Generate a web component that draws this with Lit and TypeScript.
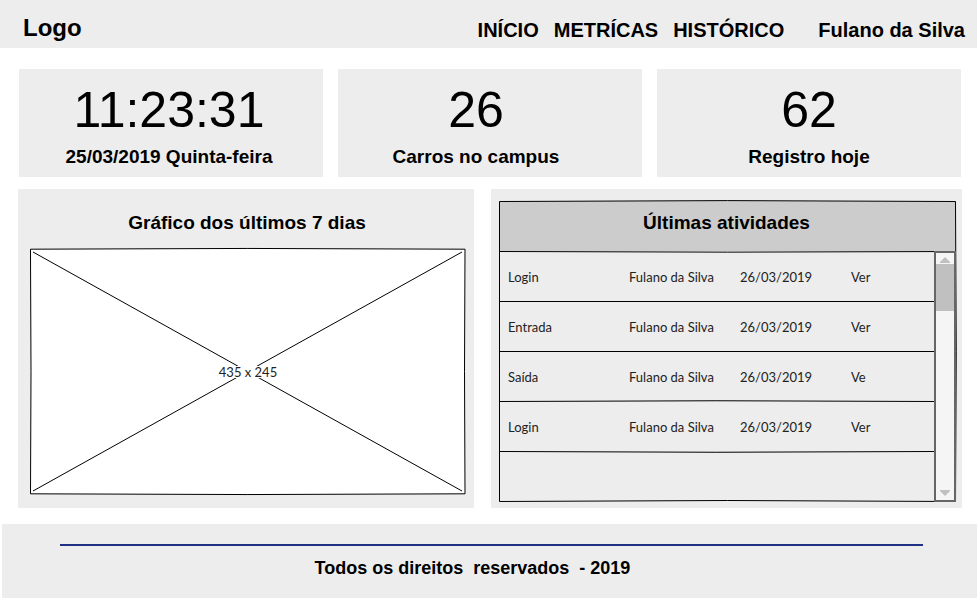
import { LitElement, html, css, svg } from "lit";
import { customElement, property } from "lit/decorators.js";

interface Stat {
  value: string;
  label: string;
  kind: string;
}

interface Activity {
  action: string;
  user: string;
  date: string;
  link: string;
}

const STATS: Stat[] = [
  { value: "11:23:31", label: "25/03/2019 Quinta-feira", kind: "clock" },
  { value: "26", label: "Carros no campus", kind: "cars" },
  { value: "62", label: "Registro hoje", kind: "records" },
];

const ACTIVITIES: Activity[] = [
  { action: "Login", user: "Fulano da Silva", date: "26/03/2019", link: "Ver" },
  { action: "Entrada", user: "Fulano da Silva", date: "26/03/2019", link: "Ver" },
  { action: "Saída", user: "Fulano da Silva", date: "26/03/2019", link: "Ve" },
  { action: "Login", user: "Fulano da Silva", date: "26/03/2019", link: "Ver" },
];

@customElement("chart-placeholder")
class ChartPlaceholder extends LitElement {
  @property() label = "";

  static styles = css`
    :host {
      position: relative;
      display: grid;
      place-items: center;
      height: 247px;
    }
    .sketch {
      position: absolute;
      inset: 0;
      width: 100%;
      height: 100%;
      overflow: visible;
    }
    .frame {
      fill: #fff;
      stroke: #000;
      vector-effect: non-scaling-stroke;
    }
    .cross {
      fill: none;
      stroke: #000;
      vector-effect: non-scaling-stroke;
    }
    .size {
      position: relative;
      background: #fff;
      font: 13px/12px Lato, "Open Sans", sans-serif;
      color: #222;
    }
  `;

  render() {
    return html`
      <svg class="sketch" viewBox="0 0 436 247" preserveAspectRatio="none" aria-hidden="true">
        <path
          class="frame"
          d="M0.5 1.2 Q218 -0.3 435 1.2 Q434 124 435 245.8 Q218 247.3 0.5 245.8 Q1.5 124 0.5 1.2Z"
        />
        <path class="cross" d="M3 4 L432 243 M432 4 L3 243" />
      </svg>
      <span class="size">${this.label}</span>
    `;
  }
}

@customElement("activity-list")
class ActivityList extends LitElement {
  @property({ attribute: false }) items: Activity[] = [];

  static styles = css`
    :host {
      position: relative;
      display: block;
    }
    .title {
      margin: 0;
      height: 50px;
      box-sizing: border-box;
      padding-right: 2px;
      background: #ccc;
      text-align: center;
      font-size: 19px;
      line-height: 44px;
      font-weight: bold;
    }
    .body {
      display: flex;
      height: 251px;
    }
    .rows {
      flex: 1;
    }
    .table {
      width: 100%;
      border-collapse: collapse;
      table-layout: fixed;
      font: 13px/20px Lato, "Open Sans", sans-serif;
      color: #222;
    }
    .wide {
      width: 121px;
    }
    .mid {
      width: 111px;
    }
    .cell {
      height: 50px;
      box-sizing: border-box;
      padding: 1px 0 0 9px;
      text-align: left;
    }
    .link {
      color: inherit;
      text-decoration: none;
    }
    .lines {
      position: absolute;
      inset: 0;
      width: 100%;
      height: 100%;
      overflow: visible;
      pointer-events: none;
    }
    .line {
      fill: none;
      stroke: #000;
      vector-effect: non-scaling-stroke;
    }
    .scroll {
      position: relative;
      z-index: 1;
      box-sizing: border-box;
      width: 22px;
      border: 2px solid #666;
      background: #f5f5f5;
      display: flex;
      flex-direction: column;
    }
    .arrow {
      display: grid;
      place-items: center;
      box-sizing: border-box;
      height: 11px;
      padding: 3px 0 1px;
      border: 0;
      background: none;
    }
    .down {
      margin-top: auto;
      height: 14px;
      padding: 0;
    }
    .glyph {
      display: block;
      width: 10px;
      height: 6px;
      fill: #c0c0c0;
    }
    .thumb {
      height: 47px;
      background: #c0c0c0;
    }
  `;

  render() {
    return html`
      <h2 class="title" id="title">Últimas atividades</h2>
      <div class="body">
        <div class="rows">
          <table class="table" aria-labelledby="title">
            <colgroup>
              <col class="wide" />
              <col class="mid" />
              <col class="mid" />
              <col />
            </colgroup>
            <tbody>
              ${this.items.map(
                (a) => html`<tr>
                  <td class="cell">${a.action}</td>
                  <td class="cell">${a.user}</td>
                  <td class="cell">${a.date}</td>
                  <td class="cell"><a class="link" href="#ver">${a.link}</a></td>
                </tr>`
              )}
            </tbody>
          </table>
        </div>
        <div class="scroll">
          <button class="arrow" aria-label="Rolar para cima">
            <svg class="glyph" viewBox="0 0 10 6"><path d="M5 0 L10 5 V6 H0 V5Z" /></svg>
          </button>
          <div class="thumb"></div>
          <button class="arrow down" aria-label="Rolar para baixo">
            <svg class="glyph" viewBox="0 0 10 6"><path d="M0 0 H10 V1 L5 6 L0 1Z" /></svg>
          </button>
        </div>
      </div>
      <svg class="lines" viewBox="0 0 457 301" preserveAspectRatio="none" aria-hidden="true">
        ${[
          "M0.5 0.5 Q228 -1.3 456.5 0.5 Q458 150 456.5 300.5",
          "M0.5 0.5 V300.5 Q228 298.5 456.5 300.5",
          "M0.5 50.5 Q228 51.8 456.5 50.5",
          "M0.5 100.5 H435",
          "M0.5 150.5 H435",
          "M0.5 200.5 Q218 199 435 200.5",
          "M0.5 250.5 Q218 252 435 250.5",
        ].map((d) => svg`<path class="line" d=${d} />`)}
      </svg>
    `;
  }
}

@customElement("app-root")
class AppRoot extends LitElement {
  static styles = css`
    :host {
      display: block;
      background: #fff;
      color: #000;
      font-family: "Liberation Sans", Arial, sans-serif;
      font-weight: bold;
    }
    .header {
      display: flex;
      align-items: flex-start;
      box-sizing: border-box;
      height: 48px;
      padding: 14px 12px 0 23px;
      background: #ededed;
      font-size: 20px;
      line-height: 32px;
    }
    .logo {
      margin-right: auto;
      font-size: 24px;
      line-height: 28px;
    }
    .nav {
      display: flex;
      gap: 15px;
      margin-right: 34px;
    }
    .link {
      color: inherit;
      text-decoration: none;
    }
    .stats {
      display: grid;
      grid-template-columns: repeat(3, 1fr);
      gap: 15px;
      padding: 21px 16px 0 19px;
    }
    .card {
      height: 108px;
      box-sizing: border-box;
      padding-top: 11px;
      background: #ededed;
      text-align: center;
    }
    .clock {
      padding-right: 4px;
    }
    .cars {
      padding-right: 28px;
    }
    .value {
      margin: 0;
      font-size: 50px;
      line-height: 60px;
      font-weight: normal;
    }
    .label {
      margin: 0;
      padding-top: 5px;
      font-size: 19px;
      line-height: 24px;
    }
    .panels {
      display: grid;
      grid-template-columns: 456fr 471fr;
      gap: 17px;
      padding: 12px 15px 0 18px;
    }
    .panel {
      background: #ededed;
    }
    .chart {
      padding: 12px 8px 13px 12px;
    }
    .title {
      margin: 0 0 3px;
      padding-right: 2px;
      font-size: 19px;
      line-height: 44px;
      text-align: center;
    }
    .activity {
      padding: 12px 6px 6px 8px;
    }
    .footer {
      margin: 16px 0 0 2px;
      padding: 20px 54px 18px 58px;
      background: #ededed;
    }
    .rule {
      height: 2px;
      margin: 0;
      border: 0;
      background: #1f3184;
    }
    .rights {
      margin: 0;
      padding: 10px 38px 0 0;
      font-size: 18px;
      line-height: 24px;
      text-align: center;
      white-space: pre;
    }
  `;

  render() {
    return html`
      <header class="header">
        <a class="link logo" href="#inicio">Logo</a>
        <nav class="nav">
          <a class="link" href="#inicio">INÍCIO</a>
          <a class="link" href="#metricas">METRÍCAS</a>
          <a class="link" href="#historico">HISTÓRICO</a>
        </nav>
        <a class="link" href="#perfil">Fulano da Silva</a>
      </header>
      <main>
        <section class="stats">
          ${STATS.map(
            (s) => html`<article class="card ${s.kind}">
              <p class="value">${s.value}</p>
              <p class="label">${s.label}</p>
            </article>`
          )}
        </section>
        <div class="panels">
          <section class="panel chart">
            <h2 class="title">Gráfico dos últimos 7 dias</h2>
            <chart-placeholder label="435 x 245"></chart-placeholder>
          </section>
          <section class="panel activity">
            <activity-list .items=${ACTIVITIES}></activity-list>
          </section>
        </div>
      </main>
      <footer class="footer">
        <hr class="rule" />
        <p class="rights">${"Todos os direitos  reservados  - 2019"}</p>
      </footer>
    `;
  }
}
